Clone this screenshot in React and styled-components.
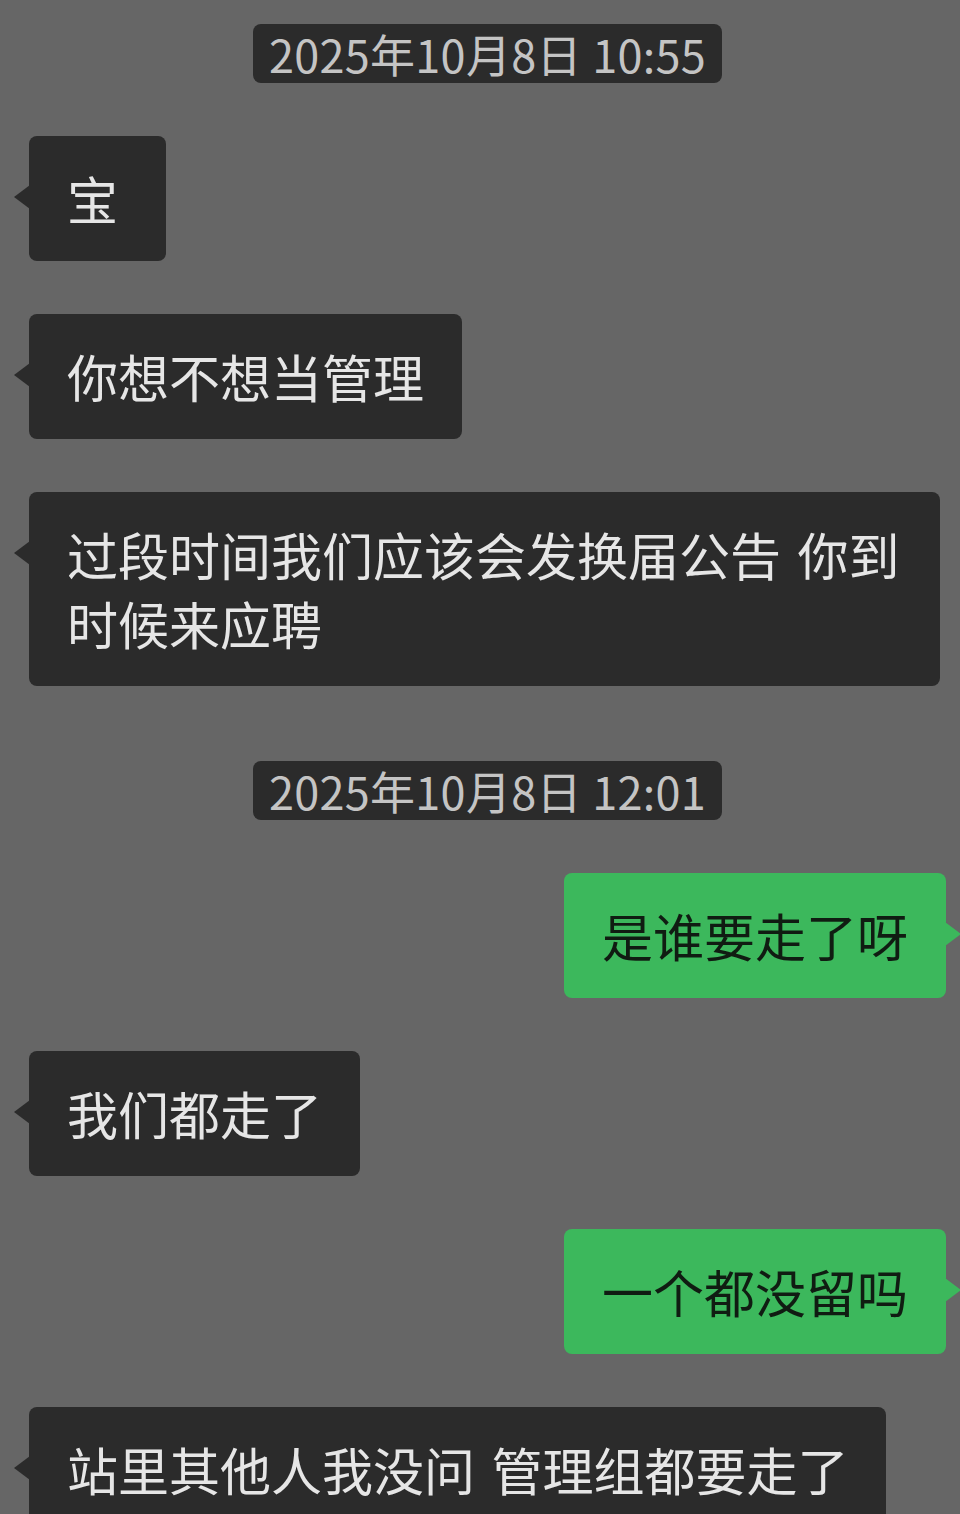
import React from 'react'
import styled, { createGlobalStyle } from 'styled-components'

const GlobalStyle = createGlobalStyle`
  html, body {
    margin: 0;
    padding: 0;
    background: #666666;
  }
  body {
    font-family: "Noto Sans CJK SC", "Noto Sans", sans-serif;
    -webkit-font-smoothing: antialiased;
  }
`

const chat = [
  { type: 'time', text: '2025年10月8日 10:55' },
  { type: 'in', text: '宝' },
  { type: 'in', text: '你想不想当管理' },
  { type: 'in', text: '过段时间我们应该会发换届公告 你到时候来应聘' },
  { type: 'time', text: '2025年10月8日 12:01', spaced: true },
  { type: 'out', text: '是谁要走了呀' },
  { type: 'in', text: '我们都走了' },
  { type: 'out', text: '一个都没留吗' },
  { type: 'in', text: '站里其他人我没问 管理组都要走了' },
]

const App = () => {
  return (
    <>
      <GlobalStyle />
      <Screen>
        {chat.map((m, i) =>
          m.type === 'time' ? (
            <TimeRow key={i} spaced={m.spaced}>
              <Stamp>{m.text}</Stamp>
            </TimeRow>
          ) : (
            <Row key={i} mine={m.type === 'out'}>
              <Bubble mine={m.type === 'out'}>{m.text}</Bubble>
            </Row>
          )
        )}
      </Screen>
    </>
  )
}

export default App

const Screen = styled.div`
  display: flex;
  flex-direction: column;
  gap: 53px;
  padding: 24px 14px 0 29px;
  min-height: 1514px;
  box-sizing: border-box;
`

const TimeRow = styled.div`
  display: flex;
  justify-content: center;
  margin-top: ${props => props.spaced ? '22px' : '0'};
`

const Stamp = styled.div`
  background: #2b2b2b;
  color: #c4c4c4;
  font-size: 45px;
  line-height: 59px;
  letter-spacing: 0.3px;
  padding: 0 16px;
  border-radius: 8px;
  white-space: nowrap;
`

const Row = styled.div`
  display: flex;
  justify-content: ${props => props.mine ? 'flex-end' : 'flex-start'};
`

const Bubble = styled.div`
  position: relative;
  box-sizing: border-box;
  min-width: 137px;
  max-width: 911px;
  padding: 28px 38px 28px;
  border-radius: 8px;
  font-size: 51px;
  line-height: 69px;
  word-spacing: 5px;
  background: ${props => props.mine ? '#3cb85c' : '#2b2b2b'};
  color: ${props => props.mine ? '#101c12' : '#e6e6e6'};

  &::before{
    content: '';
    position: absolute;
    top: 49px;
    ${props => props.mine ? 'right: -15px;' : 'left: -15px;'}
    border-top: 12px solid transparent;
    border-bottom: 12px solid transparent;
    ${props => props.mine
      ? 'border-left: 16px solid #3cb85c;'
      : 'border-right: 16px solid #2b2b2b;'}
  }
`
